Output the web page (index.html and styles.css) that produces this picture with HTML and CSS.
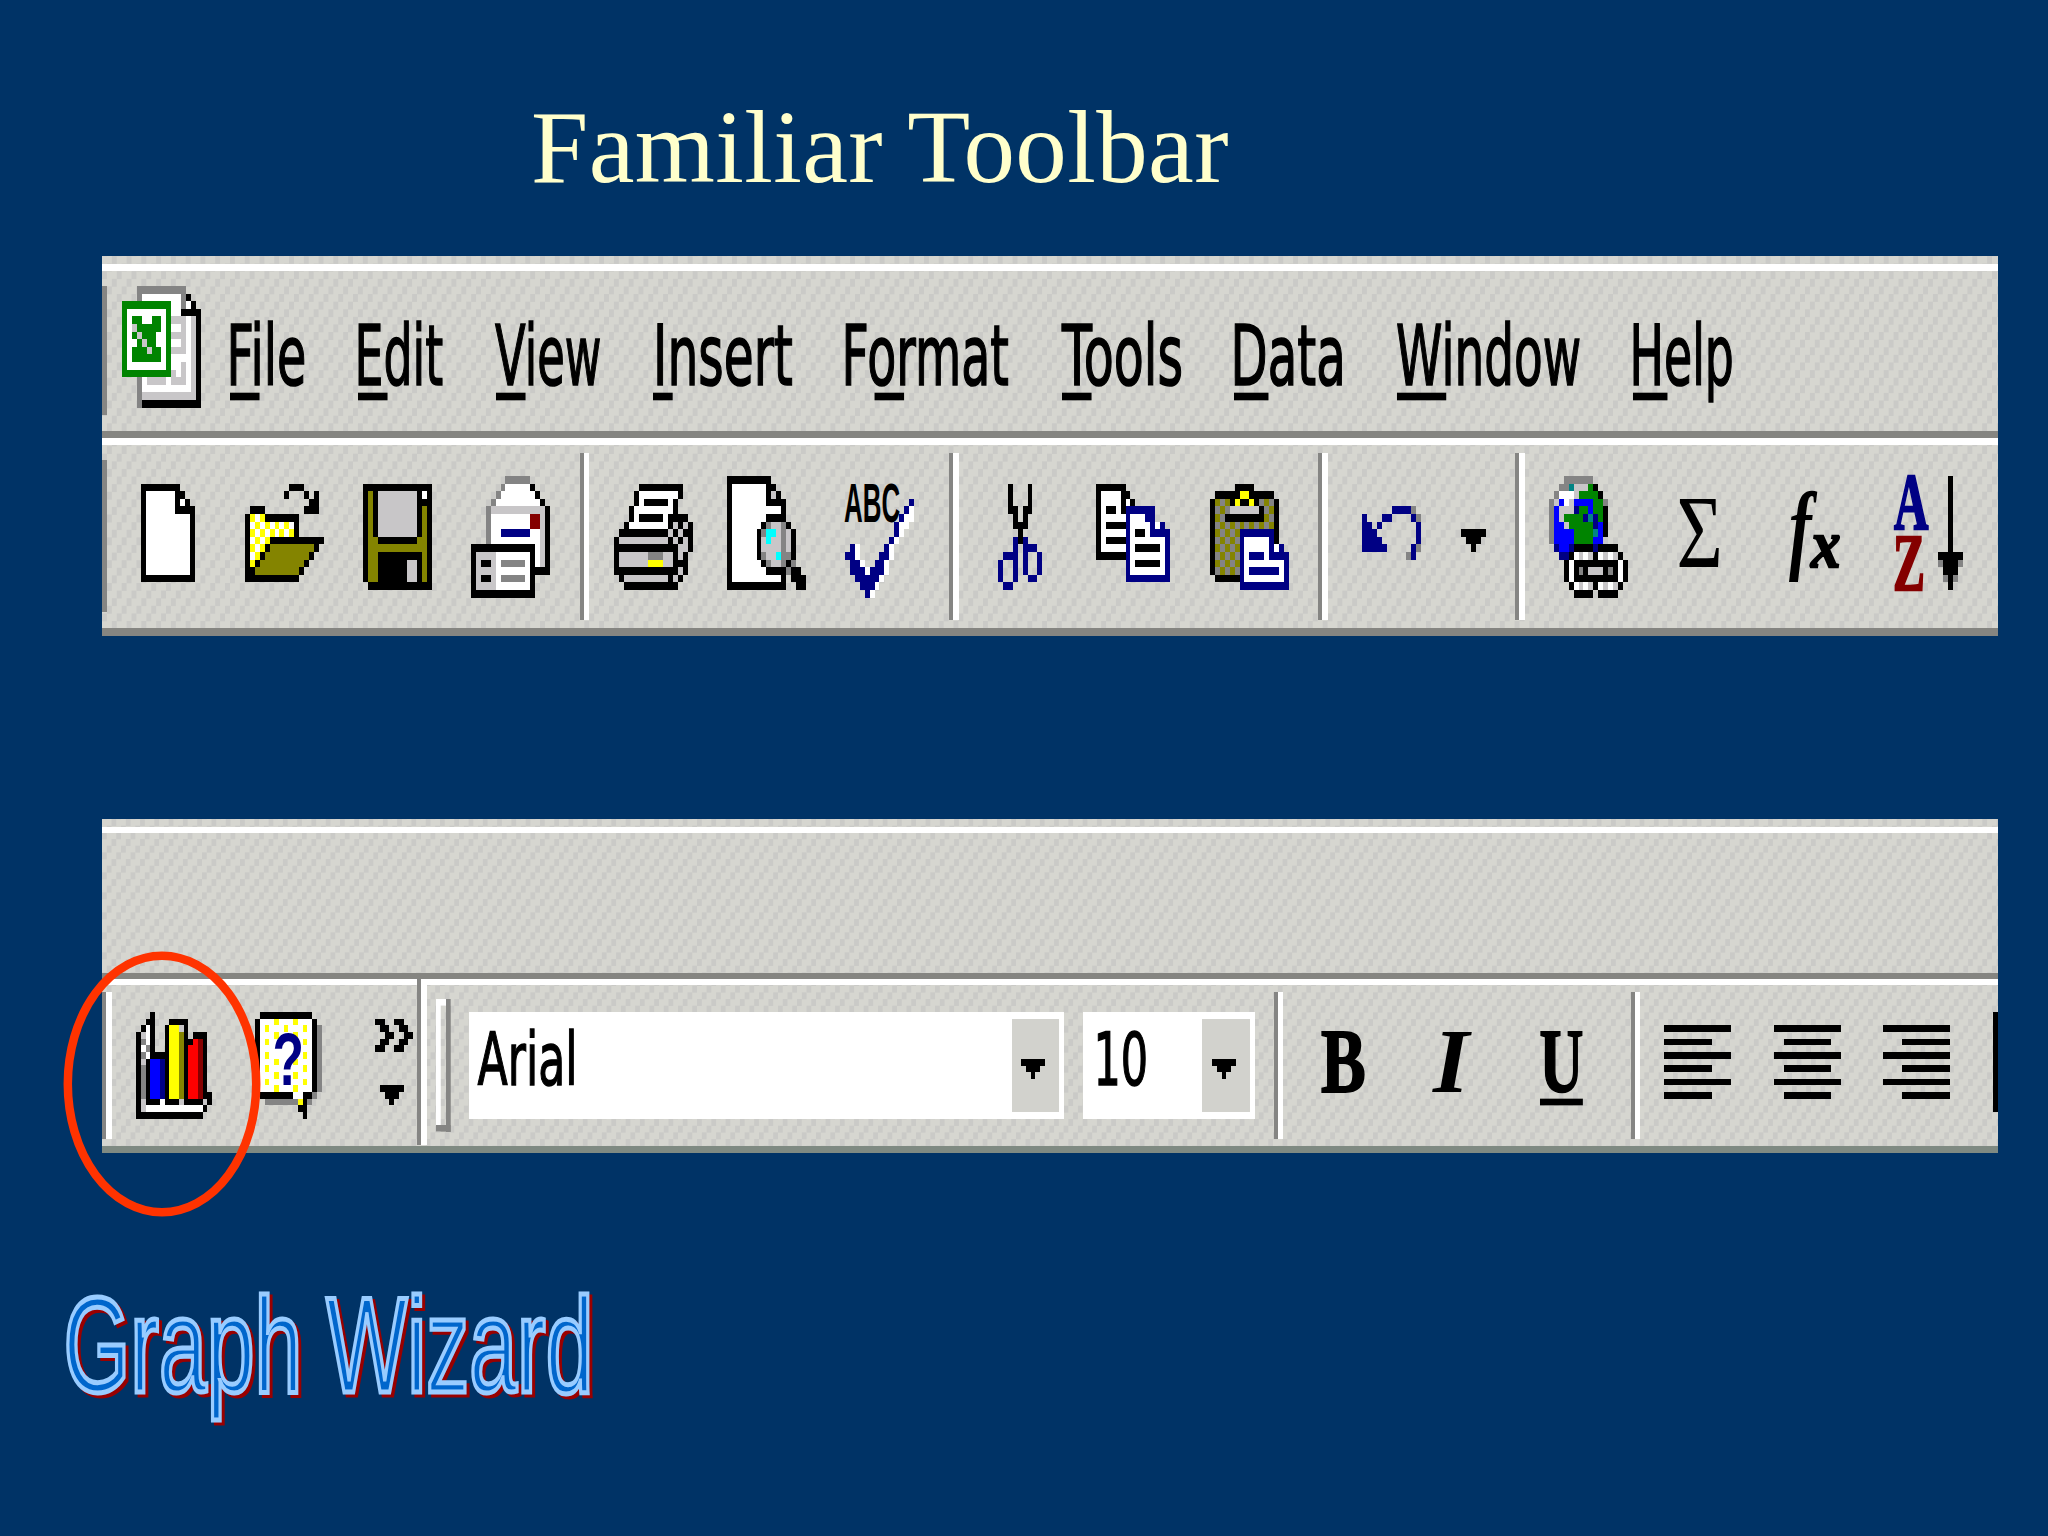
FILE: index.html
```html
<!DOCTYPE html>
<html lang="en">
<head>
<meta charset="utf-8">
<title>Familiar Toolbar</title>
<link rel="stylesheet" href="styles.css">
</head>
<body>
<main class="slide">
  <h1 class="title">Familiar Toolbar</h1>

  <section class="panel panel-main">
    <div class="edge"></div>
    <nav class="menubar">
      <i class="grip-line menu-grip"></i>
      <svg class="sprite excel" data-icon="excel"></svg>
      <svg class="menu w15" viewBox="0 0 15 21" preserveAspectRatio="none"><text x="-.7" y="15" textLength="16.2" lengthAdjust="spacingAndGlyphs">File</text><rect y="16" width="6" height="1"/></svg>
      <svg class="menu w17" viewBox="0 0 17 21" preserveAspectRatio="none"><text x="-.7" y="15" textLength="18" lengthAdjust="spacingAndGlyphs">Edit</text><rect y="16" width="6" height="1"/></svg>
      <svg class="menu w21" viewBox="0 0 21 21" preserveAspectRatio="none"><text x="-.2" y="15" textLength="21.6" lengthAdjust="spacingAndGlyphs">View</text><rect y="16" width="6" height="1"/></svg>
      <svg class="menu w28" viewBox="0 0 28 21" preserveAspectRatio="none"><text x="0" y="15" textLength="28.4" lengthAdjust="spacingAndGlyphs">Insert</text><rect y="16" width="4" height="1"/></svg>
      <svg class="menu w33" viewBox="0 0 33 21" preserveAspectRatio="none"><text x="-.7" y="15" textLength="34" lengthAdjust="spacingAndGlyphs">Format</text><rect x="6" y="16" width="6" height="1"/></svg>
      <svg class="menu w24" viewBox="0 0 24 21" preserveAspectRatio="none"><text x="0" y="15" textLength="24.6" lengthAdjust="spacingAndGlyphs">Tools</text><rect y="16" width="6" height="1"/></svg>
      <svg class="menu w22" viewBox="0 0 22 21" preserveAspectRatio="none"><text x="-.7" y="15" textLength="23.4" lengthAdjust="spacingAndGlyphs">Data</text><rect y="16" width="7" height="1"/></svg>
      <svg class="menu w37" viewBox="0 0 37 21" preserveAspectRatio="none"><text x="-.2" y="15" textLength="37.6" lengthAdjust="spacingAndGlyphs">Window</text><rect y="16" width="10" height="1"/></svg>
      <svg class="menu w20" viewBox="0 0 20 21" preserveAspectRatio="none"><text x="-.7" y="15" textLength="21.2" lengthAdjust="spacingAndGlyphs">Help</text><rect y="16" width="7" height="1"/></svg>
    </nav>
    <div class="toolbar">
      <i class="grip-line tool-grip"></i>
      <svg class="sprite g7" data-icon="new"></svg>
      <svg class="sprite g10" data-icon="open"></svg>
      <svg class="sprite g8" data-icon="save"></svg>
      <svg class="sprite g8" data-icon="mail"></svg>
      <i class="sep g6"></i>
      <svg class="sprite g5" data-icon="print"></svg>
      <svg class="sprite g7" data-icon="preview"></svg>
      <svg class="sprite g8" data-icon="spell"><text class="abc" x="-.2" y="6" textLength="11.4" lengthAdjust="spacingAndGlyphs">ABC</text></svg>
      <i class="sep g7"></i>
      <svg class="sprite g8" data-icon="cut"></svg>
      <svg class="sprite g11" data-icon="copy"></svg>
      <svg class="sprite g8" data-icon="paste"></svg>
      <i class="sep g6"></i>
      <svg class="sprite g7" data-icon="undo"></svg>
      <svg class="sprite g8" data-icon="drop"></svg>
      <i class="sep g6"></i>
      <svg class="sprite g5" data-icon="link"></svg>
      <svg class="glyph w9 g10" viewBox="0 0 9 16" preserveAspectRatio="none"><text class="sigma" x="-.1" y="12" textLength="9.4" lengthAdjust="spacingAndGlyphs">Σ</text></svg>
      <svg class="glyph w12 g12" viewBox="0 0 12 16" preserveAspectRatio="none"><text class="fn-f" x="1.6" y="11.2" textLength="4.6" lengthAdjust="spacingAndGlyphs">f</text><text class="fn-x" x="6.1" y="12" textLength="6" lengthAdjust="spacingAndGlyphs">x</text></svg>
      <svg class="sprite g11" data-icon="sort"><text class="sort-a" x="0" y="7" textLength="7" lengthAdjust="spacingAndGlyphs">A</text><text class="sort-z" x="-.2" y="15" textLength="6.5" lengthAdjust="spacingAndGlyphs">Z</text></svg>
    </div>
    <div class="bottom-edge"></div>
  </section>

  <section class="panel panel-format">
    <div class="edge"></div>
    <div class="menubar"></div>
    <div class="toolbar">
      <i class="sep"></i>
      <svg class="sprite g5" data-icon="chart"></svg>
      <svg class="sprite g9" data-icon="help"><text class="question" x="3.7" y="11" textLength="6.6" lengthAdjust="spacingAndGlyphs">?</text></svg>
      <svg class="sprite g11" data-icon="more"></svg>
      <i class="divider g1"></i>
      <i class="handle g2"></i>
      <div class="combo combo-font g4">
        <svg class="combo-text" viewBox="0 0 25 16" preserveAspectRatio="none"><text x="1.8" y="11" textLength="21" lengthAdjust="spacingAndGlyphs">Arial</text></svg>
        <span class="combo-button"><svg class="sprite" data-icon="arrow"></svg></span>
      </div>
      <div class="combo combo-size g4">
        <svg class="combo-text" viewBox="0 0 25 16" preserveAspectRatio="none"><text x="2.2" y="11" textLength="11.5" lengthAdjust="spacingAndGlyphs">10</text></svg>
        <span class="combo-button"><svg class="sprite" data-icon="arrow"></svg></span>
      </div>
      <i class="sep g4"></i>
      <svg class="glyph w9 g8" viewBox="0 0 9 16" preserveAspectRatio="none"><text class="bold" x="0" y="12" textLength="9.4" lengthAdjust="spacingAndGlyphs">B</text></svg>
      <svg class="glyph w9 g14" viewBox="0 0 9 16" preserveAspectRatio="none"><text class="italic" x=".4" y="12" textLength="7.6" lengthAdjust="spacingAndGlyphs">I</text></svg>
      <svg class="glyph w9 g14" viewBox="0 0 9 16" preserveAspectRatio="none"><text class="bold" x="-.1" y="12" textLength="9.2" lengthAdjust="spacingAndGlyphs">U</text><rect y="13" width="9" height="1"/></svg>
      <i class="sep g10"></i>
      <svg class="sprite g5" data-icon="left"></svg>
      <svg class="sprite g9" data-icon="center"></svg>
      <svg class="sprite g9" data-icon="right"></svg>
      <i class="cut-off g9"></i>
    </div>
    <div class="bottom-edge"></div>
    <svg class="ring" viewBox="0 0 198 266"><ellipse cx="99" cy="133" rx="94.2" ry="128.2"/></svg>
  </section>

  <svg class="wordart" viewBox="0 0 560 160">
    <text class="wordart-shadow" x="10.5" y="114.7" textLength="530" lengthAdjust="spacingAndGlyphs">Graph Wizard</text>
    <text class="wordart-face" x="7.5" y="111.7" textLength="530" lengthAdjust="spacingAndGlyphs">Graph Wizard</text>
  </svg>
</main>
<script src="icons.js"></script>
</body>
</html>
```
FILE: styles.css
```css
* { box-sizing: border-box; }

body {
  margin: 0;
  background: #003366;
}

.slide {
  width: 2048px;
  height: 1536px;
  overflow: hidden;
  background: #003366;
  display: flex;
  flex-direction: column;
}

.title {
  margin: 0;
  height: 255.6px;
  padding: 88px 0 0 531px;
  font: 400 103px/118px "Liberation Serif", serif;
  letter-spacing: .38px;
  color: #ffffcc;
  white-space: nowrap;
}

/* Both panels are drawn on a coarse grid: --cw and --ch are one cell. */
.panel {
  --dot: #cacac7;
  position: relative;
  flex: none;
  margin-left: 102.1px;
  width: 1895.6px;
  height: calc(50 * var(--ch));
  display: flex;
  flex-direction: column;
  background-color: #d6d6d0;
  background-image:
    conic-gradient(from 0deg at 33.333% 33.333%, transparent 75%, var(--dot) 0),
    conic-gradient(from 0deg at 33.333% 33.333%, transparent 75%, var(--dot) 0),
    conic-gradient(from 0deg at 33.333% 33.333%, transparent 75%, var(--dot) 0);
  background-size: calc(3 * var(--cw)) calc(3 * var(--ch));
  background-position:
    calc(2 * var(--cw)) 0,
    var(--cw) var(--ch),
    0 calc(2 * var(--ch));
}

.panel-main { --cw: 4.9235px; --ch: 7.607px; }
.panel-format { --cw: 4.763px; --ch: 6.667px; margin-top: 183.4px; }

.edge {
  height: calc(2 * var(--ch));
  border-bottom: var(--ch) solid #fff;
}

.menubar {
  height: calc(22 * var(--ch));
  border-bottom: var(--ch) solid #858581;
  display: flex;
  align-items: flex-start;
}

.toolbar {
  height: calc(25 * var(--ch));
  border-top: var(--ch) solid #fff;
  display: flex;
  align-items: flex-start;
}

.bottom-edge {
  height: var(--ch);
  background: #858581;
}
.panel-format .bottom-edge { background: #7f8a82; }

.sprite, .glyph, .menu, .combo-text {
  display: block;
  flex: none;
  overflow: visible;
}

.toolbar > .sprite, .toolbar > .glyph, .toolbar > .combo, .cut-off { margin-top: calc(4 * var(--ch)); }
.glyph { height: calc(16 * var(--ch)); }

.g1 { margin-left: var(--cw); }
.g2 { margin-left: calc(2 * var(--cw)); }
.g4 { margin-left: calc(4 * var(--cw)); }
.g5 { margin-left: calc(5 * var(--cw)); }
.g6 { margin-left: calc(6 * var(--cw)); }
.g7 { margin-left: calc(7 * var(--cw)); }
.g8 { margin-left: calc(8 * var(--cw)); }
.g9 { margin-left: calc(9 * var(--cw)); }
.g10 { margin-left: calc(10 * var(--cw)); }
.g11 { margin-left: calc(11 * var(--cw)); }
.g12 { margin-left: calc(12 * var(--cw)); }
.g14 { margin-left: calc(14 * var(--cw)); }

.w9 { width: calc(9 * var(--cw)); }
.w12 { width: calc(12 * var(--cw)); }
.w15 { width: calc(15 * var(--cw)); }
.w17 { width: calc(17 * var(--cw)); }
.w20 { width: calc(20 * var(--cw)); }
.w21 { width: calc(21 * var(--cw)); }
.w22 { width: calc(22 * var(--cw)); }
.w24 { width: calc(24 * var(--cw)); }
.w28 { width: calc(28 * var(--cw)); }
.w33 { width: calc(33 * var(--cw)); }
.w37 { width: calc(37 * var(--cw)); }

.grip-line {
  flex: none;
  width: var(--cw);
  background: #858583;
}
.menu-grip { height: calc(17 * var(--ch)); margin-top: calc(2 * var(--ch)); }
.tool-grip { height: calc(20 * var(--ch)); margin-top: calc(2 * var(--ch)); }

.excel { margin: calc(2 * var(--ch)) calc(-5 * var(--cw)) 0 calc(3 * var(--cw)); }

.menu {
  height: calc(21 * var(--ch));
  margin-left: calc(11 * var(--cw));
}
.menu text, .combo-text text {
  font: 10.97px "DejaVu Sans", sans-serif;
  fill: #000;
  stroke: #000;
  stroke-width: .22px;
}

.sep {
  flex: none;
  width: calc(2 * var(--cw));
  height: calc(22 * var(--ch));
  margin-top: var(--ch);
  border-left: var(--cw) solid #858583;
  background: #fff;
}

.panel-format .toolbar > .sep:first-child { margin-right: 1px; }

.divider {
  flex: none;
  width: calc(2 * var(--cw));
  height: calc(25 * var(--ch));
  margin-top: calc(-1 * var(--ch));
  border-left: var(--cw) solid #858583;
  background: #fff;
}

.handle {
  flex: none;
  width: calc(3 * var(--cw));
  height: calc(20 * var(--ch));
  margin: calc(2 * var(--ch)) -1px 0 calc(2 * var(--cw));
  background:
    linear-gradient(#858583, #858583) bottom / 100% var(--ch) no-repeat,
    linear-gradient(#858583, #858583) right / var(--cw) 100% no-repeat,
    linear-gradient(#fff, #fff) top / 100% var(--ch) no-repeat,
    linear-gradient(#fff, #fff) left / var(--cw) 100% no-repeat;
}

.combo {
  flex: none;
  display: flex;
  justify-content: space-between;
  height: calc(16 * var(--ch));
  background: #fff;
}
.combo-font { width: calc(125 * var(--cw)); }
.combo-size { width: calc(36 * var(--cw)); }
.combo-text {
  width: calc(25 * var(--cw));
  height: calc(16 * var(--ch));
}
.combo-button {
  flex: none;
  width: calc(10 * var(--cw));
  height: calc(14 * var(--ch));
  margin: var(--ch) var(--cw) 0 0;
  padding: calc(6 * var(--ch)) 0 0 calc(2 * var(--cw));
  background: #d2d2cd;
}

.cut-off {
  flex: none;
  width: var(--cw);
  height: calc(15 * var(--ch));
  background: #000;
}

.bold { font: 700 13.74px "Liberation Serif", serif; stroke: #000; stroke-width: .3px; }
.italic { font: italic 700 13.74px "Liberation Serif", serif; }
.sigma { font: 13.74px "Liberation Serif", serif; }
.fn-f { font: italic 700 13.2px "Liberation Serif", serif; }
.fn-x { font: italic 700 9px "Liberation Serif", serif; stroke: #000; stroke-width: .3px; }
.abc { font: 700 7.2px "Liberation Sans", sans-serif; }
.sort-a { font: 700 10.6px "Liberation Serif", serif; fill: #000084; stroke: #000084; stroke-width: .3px; }
.sort-z { font: 700 10.6px "Liberation Serif", serif; fill: #840000; stroke: #840000; stroke-width: .3px; }
.question { font: 700 11px "Liberation Sans", sans-serif; fill: #000084; }

.ring {
  position: absolute;
  left: -39.3px;
  top: 131.3px;
  width: 198px;
  height: 266px;
}
.ring ellipse { fill: none; stroke: #ff3300; stroke-width: 8.5px; }

.wordart {
  flex: none;
  width: 560px;
  height: 160px;
  margin: 127.5px 0 0 56px;
  overflow: visible;
}
.wordart text { font: 135px "Liberation Sans", sans-serif; stroke-width: 5px; }
.wordart-shadow { fill: #990000; stroke: #990000; }
.wordart-face { fill: #0066cc; stroke: #99ccff; }
```
FILE: icons.js
```js
// Icons are stored as rows of cells, one letter per colour; "." is empty.
const colours = {
  K: '#000000', W: '#ffffff', D: '#848484', L: '#c8c6c8', G: '#008400',
  O: '#848400', Y: '#ffff00', B: '#0000ff', N: '#000084', R: '#ff0000',
  M: '#840000', C: '#00ffff', T: '#008484'
};

const icons = {
  excel: `
...DDDDDDDDDD
...DWWWWWWWWDK
GGGGGGGGGGWWDWK
GWWWWWWWWGWWKKKK
GWGGWWGGWGLLLWLK
GWLGGGGGWGWWLWLK
GWGLGGGWWGLLLWLK
GWWGLGGWWGWWLWLK
GWGGGLGGWGLLLWLK
GWGGGGGGWGWWWWLK
GWWWWWWWWGWWLWLK
GGGGGGGGGGLWLWLK
...DWLLLLWLLLWLK
...DWWWWWWWWWWLK
...DLLLLLLLLLLLK
...DKKKKKKKKKKKK`,
  new: `
...........
KKKKKKKK
KWWWWWWKK
KWWWWWWKWK
KWWWWWWKKKK
KWWWWWWWWWK
KWWWWWWWWWK
KWWWWWWWWWK
KWWWWWWWWWK
KWWWWWWWWWK
KWWWWWWWWWK
KWWWWWWWWWK
KWWWWWWWWWK
KKKKKKKKKKK`,
  open: `
................
.........KKK
........K...K.K
.............KK
.KKK........KKK
KYWYKKKKKKK
KWYWYWYWYWK
KYWYWYWYWYK
KWYWYKKKKKKKKKKK
KYWYKOOOOOOOOOK
KWYKOOOOOOOOOK
KYKOOOOOOOOOK
KKOOOOOOOOOK
KKKKKKKKKKK`,
  save: `
..............
KKKKKKKKKKKKKK
KOKLLLLLLLLKWK
KOKLLLLLLLLKKK
KOKLLLLLLLLKOK
KOKLLLLLLLLKOK
KOKLLLLLLLLKOK
KOKLLLLLLLLKOK
KOOKKKKKKKKOOK
KOOOOOOOOOOOOK
KOOKKKKKKKKKOK
KOOKKKKKKLLKOK
KOOKKKKKKLLKOK
KOOKKKKKKLLKOK
.KKKKKKKKKKKKK`,
  mail: `
.......DDDDD
......DWWWWWK
.....DWWWWWWWK
....DWWWWWWWWWK
...DLLLLLLLLLLLK
...DWWWWWWWWMMLK
...DWWWWWWWWMMLK
...DWWNNNNNNWWLK
...DWWWWWWWWWWLK
KKKKKKKKKKKKKWLK
KLLLLWWWWWWWKWLK
KLKKLWDDDDDWKWLK
KLLLLWWWWWWWKKKK
KLKKLWDDDDDWK
KLLLLWWWWWWWK
KKKKKKKKKKKKK`,
  print: `
................
.....KKKKKKKKK
....KWWWWWWWWK
....KWKKKKKWK
...KWWWWWWWWK
...KWKKKKKWKKKK
..KWWWWWWWWKLKLK
.KKKKKKKKKKLKLKK
KLLLLLLLLLLKLKLK
KKKKKKKKKKKKKLLK
KLLLLLLDDDLLKLK
KLLLLLLYYYLLKKK
KKKKKKKKKKKKKLK
.KLLLLLLLLLKLK
..KKKKKKKKKKK`,
  preview: `
KKKKKKKKK
KWWWWWWWKK
KWWWWWWWKLK
KWWWWWWWKKKK
KWWWWWWWWWWK
KWWWWWWWKKKK
KWWWWWWKDLLDK
KWWWWWKDCCLDLK
KWWWWWKLCLLDLK
KWWWWWKLLLLDLK
KWWWWWKDLLCDDK
KWWWWWWKDLLDKD
KWWWWWWWKKKKDKK
KWWWWWWWWWWK.KKK
KKKKKKKKKKKK..KK`,
  spell: `
..............
..............
..............
.............N
............NW
...........NWW
..........NWW
..........NW
.........NW
.NW.....NW
NNW....NNW
.NNW..NNW
.NNNWNNNW
..NNNNNW
...NNNW
....NW`,
  cut: `
.........
..K...K
..K...K
..K...K
..KK.KK
...K.K
...KKK
....K
...NKN
...N.NNN
.NNN.N..N
N..N.N..N
N..N.N..N
N..N..NN
.NN`,
  copy: `
...............
KKKKKK
KWWWWKK
KWWWWKWK
KWKKWKNNNNNN
KWWWWWNWWWNN
KWKKKKNWWWWNWN
KWWWWWNWKKWNNNN
KWKKKKNWWWWWWWN
KWWWWWNWKKKKKWN
KKKKKKNWWWWWWWN
......NWKKKKKWN
......NWWWWWWWN
......NNNNNNNNN`,
  paste: `
................
.....KKKK
.KKKKKYYKKKKK
KODOKYKKYKDODK
KDODLLLLLLKDOK
KODKKKKKKKKODK
KDODODODODODOK
KODODONNNNNNNK
KDODODNWWWWWNK
KODODONWWWWWNWN
KDODODNWNNNWNNNN
KODODONWWWWWWWWN
KDODODNWNNNNNNWN
.KKKKKNWWWWWWWWN
......NNNNNNNNNN`,
  undo: `
............
............
............
............
......NNNND
N...NN....ND
NN.N.......N
NNN........N
NNNN.......N
NNNNN.....ND
.........DN`,
  drop: `
.....
.....
.....
.....
.....
.....
.....
KKKKK
.KKK
..K`,
  link: `
...DDDDDD
..DDTLLLGK
.DWWWLGGGGK
DLBWLBBBBGGD
DBLLLNGGBGGK
DBLGGGGNTNGK
DBBLGGGGGNBK
DBBBBGGGGTBK
DBBBBGGGGBBL
.NBBNKKKKNKKKK
..NNKWLWLKWLWLK
...KWKKKKKKKKKWK
...KWKDKLLLKDKWK
...KWKKKKKKKKKWK
....KWLWLKWLWLK
.....KKKK.KKKK`,
  sort: `
...........K..
...........K..
...........K..
...........K..
...........K..
...........K..
...........K..
...........K..
...........K..
...........K..
.........KKKKK
.........DKKKD
..........KKK
..........DKD
...........K`,
  chart: `
...K
..KK...KKKK
.KWK..KYYLK
KLWK..KYYOK.KKK
KDWK..KYYOKKRMK
KWDK..KYYOKRRMK
KDWKKKKYYOKRRMK
KLKBBNKYYOKRRMK
KDKBBNKYYOKRRMK
KDKBBNKYYOKRRMK
KDKBBNKYYOKRRMK
KDKBBNKYYOKRRMK
KDKBBNKYYOKRRMKK
KLKKKWKKKLKKKKLK
KLWWWWWWWWWWWWK
KKKKKKKKKKKKKK`,
  help: `
.KKKKKKKKKKK
KWWWYWWWYWWWK
KWYWWWYWWWYWKD
KWWWYWWWYWWWKD
KWYWWWWWWWYWKD
KWWWWWWWWWWWKD
KWYWWWWWWWYWKD
KWWWYWWWYWWWKD
KWYWWWWWWWYWKD
KWWWYWWWYWWWKD
KWYWWWWWWWYWKD
KWWWYWWWYWWWKD
.KKKKKKKWWKKD
..DDDDDDDYKD
.........KK
..........K`,
  more: `
........
KK..KK
.KK..KK
..KK..KK
.KK..KK
KK..KK
........
........
........
........
........
.KKKKK
..KKK
...K`,
  arrow: `
KKKKK
.KKK
..K`,
  left: `
..............
..............
KKKKKKKKKKKKKK
..............
KKKKKKKKKK
..............
KKKKKKKKKKKKKK
..............
KKKKKKKKKK
..............
KKKKKKKKKKKKKK
..............
KKKKKKKKKK`,
  center: `
..............
..............
KKKKKKKKKKKKKK
..............
..KKKKKKKKKK
..............
KKKKKKKKKKKKKK
..............
..KKKKKKKKKK
..............
KKKKKKKKKKKKKK
..............
..KKKKKKKKKK`,
  right: `
..............
..............
KKKKKKKKKKKKKK
..............
....KKKKKKKKKK
..............
KKKKKKKKKKKKKK
..............
....KKKKKKKKKK
..............
KKKKKKKKKKKKKK
..............
....KKKKKKKKKK`
};

for (const svg of document.querySelectorAll('.sprite')) {
  const rows = icons[svg.dataset.icon].trim().split('\n');
  const width = Math.max(...rows.map(row => row.length));
  const paths = {};
  rows.forEach((row, y) => {
    for (const run of row.matchAll(/([A-Z])\1*/g)) {
      paths[run[1]] = (paths[run[1]] || '') + `M${run.index} ${y}h${run[0].length}v1h-${run[0].length}z`;
    }
  });
  svg.setAttribute('viewBox', `0 0 ${width} ${rows.length}`);
  svg.setAttribute('preserveAspectRatio', 'none');
  svg.style.width = `calc(${width} * var(--cw))`;
  svg.style.height = `calc(${rows.length} * var(--ch))`;
  for (const [key, d] of Object.entries(paths).reverse()) {
    const path = document.createElementNS('http://www.w3.org/2000/svg', 'path');
    path.setAttribute('d', d);
    path.setAttribute('fill', colours[key]);
    path.setAttribute('shape-rendering', 'crispEdges');
    svg.prepend(path);
  }
}
```
